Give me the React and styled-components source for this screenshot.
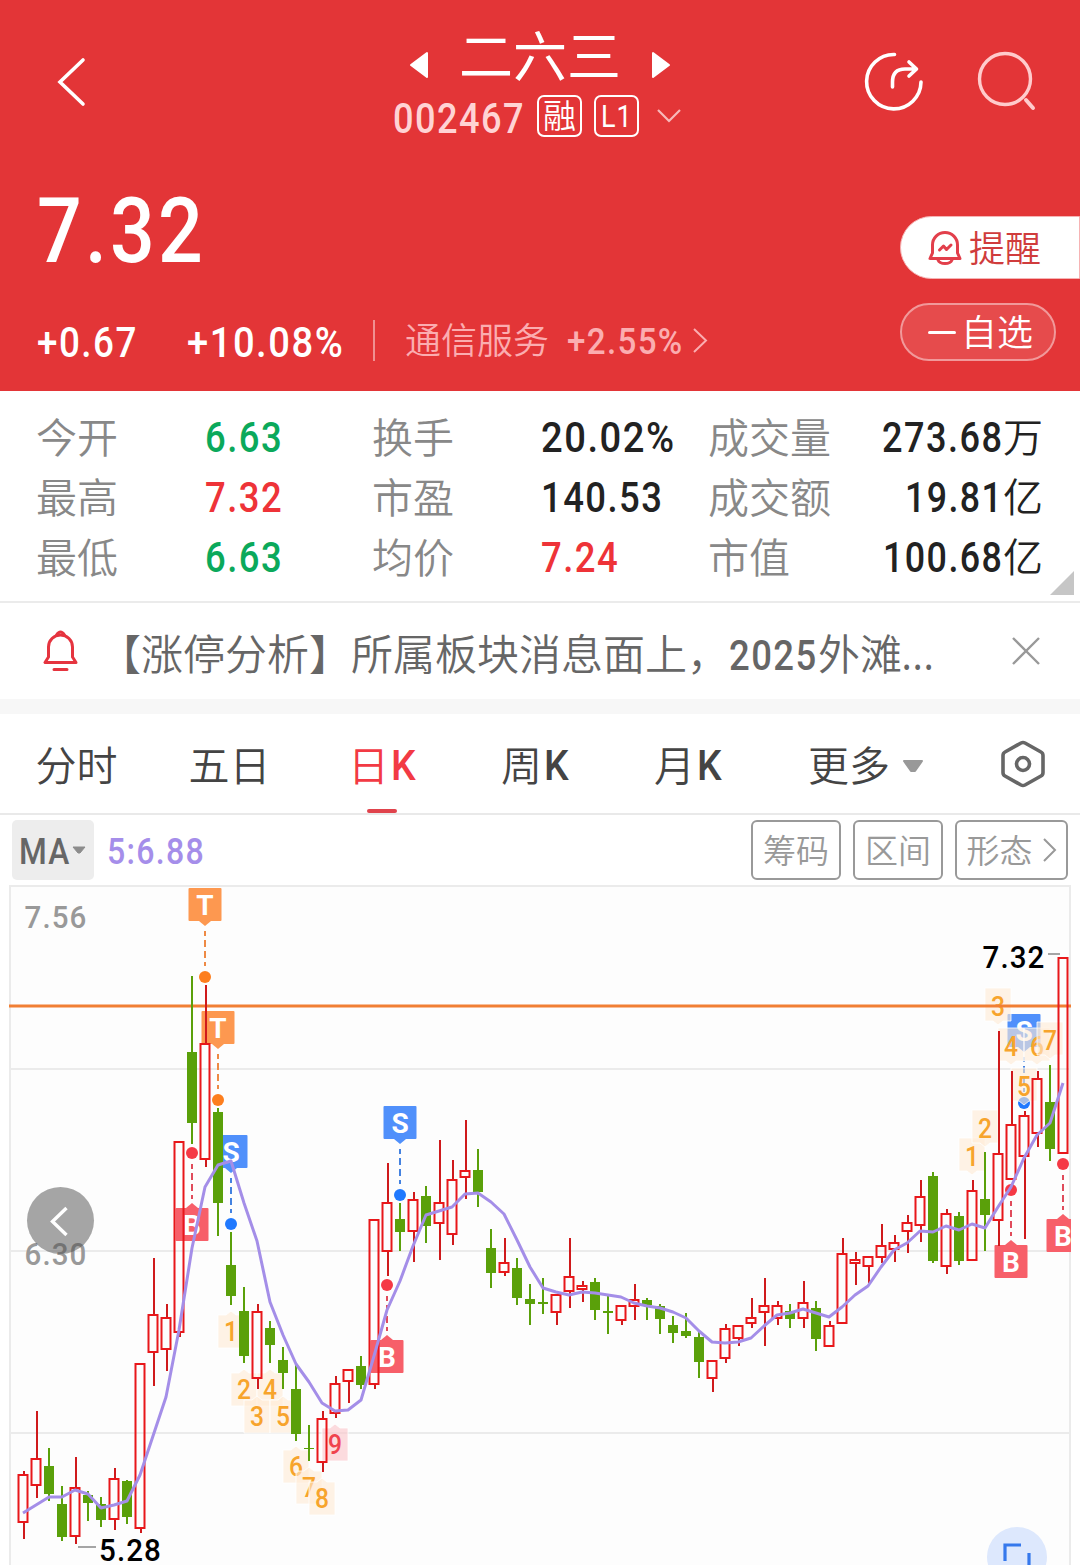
import React, { useLayoutEffect, useRef, useState } from 'react';
import styled, { createGlobalStyle } from 'styled-components';

const GlobalStyle = createGlobalStyle`
  * {
    box-sizing: border-box;
  }

  body {
    margin: 0;
    background: #fff;
    font-family: Roboto, 'Noto Sans CJK SC', sans-serif;
  }

  button {
    font-family: inherit;
  }
`;

const Page = styled.div`
  width: 1080px;
  height: 1565px;
  overflow: hidden;
  display: flex;
  flex-direction: column;
  background: #fff;
`;

const Cjk = styled.span`
  padding-bottom: 0.12em;
  font-family: 'Noto Sans CJK SC', sans-serif;
  font-weight: ${({ $weight }) => $weight || 350};
  font-size: ${({ $size }) => $size}px;
  line-height: 1;
  color: ${({ $color }) => $color || 'inherit'};
  white-space: nowrap;
`;

const NumBox = styled.span`
  display: inline-block;
  flex: none;
  width: ${({ $width }) => $width}px;
  font-size: ${({ $size }) => $size}px;
  font-weight: ${({ $weight }) => $weight || 500};
  letter-spacing: 0.04em;
  line-height: 1;
  color: ${({ $color }) => $color || 'inherit'};
`;

const NumInner = styled.span`
  display: inline-block;
  white-space: nowrap;
  transform-origin: left center;
`;

// Narrow numerals: squeezes the text into the given width
function Num({ width, size, weight, color, children }) {
  const ref = useRef(null);
  const [scale, setScale] = useState(1);

  useLayoutEffect(() => {
    setScale(width / ref.current.offsetWidth);
  }, [width, children]);

  return (
    <NumBox $width={width} $size={size} $weight={weight} $color={color}>
      <NumInner ref={ref} style={{ transform: `scaleX(${scale})` }}>
        {children}
      </NumInner>
    </NumBox>
  );
}

/* ---------- header ---------- */

const Header = styled.header`
  height: 391px;
  flex: none;
  background: #e33537;
  color: #fff;
`;

const TopBar = styled.div`
  display: grid;
  grid-template-columns: 340px 400px 340px;
  height: 150px;
`;

const BackSlot = styled.div`
  padding: 57px 0 0 57px;
`;

const TitleBlock = styled.div`
  display: flex;
  flex-direction: column;
  align-items: center;
  padding-top: 29px;
`;

const TitleRow = styled.div`
  display: flex;
  align-items: center;
  gap: 30px;
  height: 60px;

  svg {
    margin-top: 12px;
  }

  ${Cjk} {
    margin-top: -4px;
  }
`;

const CodeRow = styled.div`
  display: flex;
  align-items: center;
  height: 42px;
  margin-top: 6px;
  padding-right: 5px;
`;

const Code = styled.span`
  padding-top: 4px;
`;

const Tag = styled.span`
  display: flex;
  align-items: center;
  justify-content: center;
  width: 45px;
  height: 42px;
  margin-left: 12px;
  border: 2px solid #fff;
  border-radius: 7px;
`;

const ChevronDown = styled.svg`
  margin-left: 17px;
`;

const TopActions = styled.div`
  display: flex;
  gap: 53px;
  padding: 51px 0 0 124px;
`;

const Quote = styled.div`
  display: grid;
  grid-template-columns: 900px 180px;
  height: 241px;
`;

const PriceColumn = styled.div`
  padding: 37px 0 0 37px;
`;

const Price = styled.div`
  height: 90px;
`;

const ChangeRow = styled.div`
  display: flex;
  align-items: center;
  height: 42px;
  margin-top: 44px;
`;

const Gap = styled.span`
  flex: none;
  width: ${({ $w }) => $w}px;
`;

const Divider = styled.span`
  width: 2px;
  height: 41px;
  margin: -3px 30px 0 29px;
  background: rgba(255, 255, 255, 0.45);
`;

const Sector = styled.span`
  display: flex;
  align-items: center;
  color: #fbadb0;

  ${Cjk} {
    margin-top: -3px;
  }

  svg {
    margin-top: -3px;
  }
`;

const ActionColumn = styled.div`
  display: flex;
  flex-direction: column;
  align-items: flex-start;
  gap: 24px;
  padding-top: 66px;
`;

const RemindButton = styled.button`
  display: flex;
  align-items: center;
  gap: 7px;
  width: 180px;
  height: 63px;
  padding: 1px 0 0 27px;
  border: 1px solid #f6b3b4;
  border-radius: 32px 0 0 32px;
  background: #fff;
  color: #d03c3c;
`;

const WatchButton = styled.button`
  display: flex;
  align-items: center;
  gap: 5px;
  width: 156px;
  height: 58px;
  padding: 1px 0 0 26px;
  border: 2px solid #f1999a;
  border-radius: 29px;
  background: #e64b4c;
  color: #fff;
`;

const Minus = styled.span`
  width: 28px;
  height: 3px;
  border-radius: 2px;
  background: #fff;
`;

/* ---------- stats ---------- */

const Stats = styled.section`
  position: relative;
  flex: none;
  display: grid;
  grid-template-columns: 169px 167px 169px 167px 140px 1fr;
  grid-template-rows: repeat(3, 60px);
  height: 212px;
  padding: 16px 37px 0 36px;
  border-bottom: 2px solid #ebebeb;
  align-items: center;
`;

const StatValue = styled.span`
  display: flex;
  align-items: center;
  justify-content: ${({ $right }) => ($right ? 'flex-end' : 'flex-start')};
  padding-top: 1px;
  color: ${({ $color }) => $color || '#222'};

  ${Cjk} {
    margin-top: 0;
  }
`;

const StatLabel = styled(Cjk)`
  padding-top: 2px;
  color: #888;
`;

const Corner = styled.span`
  position: absolute;
  right: 6px;
  bottom: 6px;
  width: 24px;
  height: 24px;
  background: #c6c6c6;
  clip-path: polygon(100% 0, 100% 100%, 0 100%);
`;

/* ---------- news ---------- */

const News = styled.section`
  flex: none;
  display: flex;
  align-items: center;
  height: 111px;
  padding: 0 40px 0 43px;
  border-bottom: 15px solid #f7f7f7;
  color: #666;
`;

const NewsText = styled.p`
  display: flex;
  align-items: center;
  flex: 1;
  margin: 8px 0 0 21px;

  ${Cjk} {
    margin-top: 0;
  }
`;

/* ---------- tabs ---------- */

const Tabs = styled.nav`
  flex: none;
  display: flex;
  height: 101px;
  border-bottom: 2px solid #e9e9e9;
`;

const Tab = styled.button`
  position: relative;
  display: flex;
  align-items: center;
  justify-content: center;
  gap: 2px;
  width: ${({ $wide }) => ($wide ? 202 : 153)}px;
  padding: 4px 0 0;
  border: 0;
  background: none;
  color: ${({ $active }) => ($active ? '#f23a44' : '#444')};

  ${({ $active }) =>
    $active &&
    `&::after {
      content: '';
      position: absolute;
      left: 61px;
      bottom: 0;
      width: 30px;
      height: 4px;
      border-radius: 2px;
      background: #e0434c;
    }`}
`;

const MoreArrow = styled.svg`
  margin-left: 10px;
`;

const Settings = styled.div`
  padding: 26px 0 0 33px;
`;

/* ---------- indicator bar ---------- */

const IndicatorBar = styled.div`
  flex: none;
  display: flex;
  align-items: center;
  height: 70px;
  padding: 0 12px;
`;

const MaButton = styled.button`
  display: flex;
  align-items: center;
  gap: 0;
  width: 82px;
  height: 60px;
  padding: 4px 0 0 7px;
  margin-right: 13px;
  border: 0;
  border-radius: 5px;
  background: #ededed;
  color: #666;
`;

const MaValue = styled.span`
  display: flex;
  flex: 1;
  padding-top: 4px;
`;

const ChipButton = styled.button`
  display: flex;
  align-items: center;
  justify-content: center;
  gap: 10px;
  width: ${({ $width }) => $width}px;
  height: 60px;
  padding: 2px 0 0;
  margin-left: 12px;
  border: 2px solid #999;
  border-radius: 6px;
  background: #fff;
  color: #999;
`;

/* ---------- chart ---------- */

const ChartArea = styled.div`
  position: relative;
  flex: none;
  height: 680px;

  > svg {
    display: block;
  }
`;

const PrevButton = styled.button`
  position: absolute;
  left: 27px;
  top: 302px;
  width: 67px;
  height: 67px;
  padding: 0;
  border: 0;
  border-radius: 50%;
  background: rgba(77, 77, 77, 0.5);
`;

const ExpandButton = styled.button`
  position: absolute;
  left: 987px;
  top: 642px;
  width: 60px;
  height: 60px;
  padding: 0;
  border: 0;
  border-radius: 50%;
  background: #dde8fd;
`;

// [up, high, top, bottom, low], in chart pixels
const candles = [
  [1, 1471, 1474, 1523, 1539], [1, 1411, 1458, 1486, 1498], [0, 1448, 1466, 1494, 1501],
  [0, 1486, 1504, 1537, 1541], [1, 1457, 1487, 1537, 1544], [0, 1491, 1495, 1503, 1521],
  [0, 1497, 1504, 1520, 1527], [1, 1468, 1478, 1520, 1530], [0, 1480, 1481, 1517, 1524],
  [1, 1363, 1363, 1529, 1533], [1, 1258, 1314, 1353, 1386], [1, 1304, 1317, 1350, 1371],
  [1, 1141, 1141, 1333, 1337], [0, 976, 1052, 1123, 1144], [1, 985, 1043, 1160, 1167],
  [0, 1108, 1112, 1203, 1236], [0, 1232, 1265, 1296, 1305], [0, 1287, 1311, 1356, 1363],
  [1, 1304, 1311, 1379, 1389], [0, 1321, 1328, 1345, 1363], [0, 1347, 1360, 1373, 1389],
  [0, 1365, 1389, 1434, 1441], [0, 1425, 1448, 1449, 1461], [1, 1411, 1418, 1463, 1472],
  [1, 1376, 1383, 1414, 1418], [1, 1369, 1369, 1382, 1403], [0, 1356, 1366, 1385, 1389],
  [1, 1219, 1219, 1385, 1389], [1, 1163, 1202, 1252, 1276], [0, 1203, 1219, 1232, 1251],
  [1, 1192, 1199, 1232, 1262], [0, 1186, 1196, 1226, 1243], [1, 1140, 1202, 1224, 1260],
  [1, 1160, 1179, 1235, 1245], [1, 1120, 1170, 1178, 1199], [0, 1149, 1170, 1192, 1207],
  [0, 1229, 1248, 1273, 1288], [1, 1238, 1262, 1273, 1276], [0, 1258, 1268, 1298, 1305],
  [0, 1284, 1299, 1304, 1325], [0, 1278, 1302, 1304, 1314], [1, 1294, 1294, 1313, 1325],
  [1, 1238, 1276, 1292, 1308], [1, 1281, 1285, 1290, 1302], [0, 1278, 1282, 1310, 1320],
  [0, 1296, 1311, 1313, 1334], [1, 1305, 1305, 1321, 1325], [1, 1284, 1299, 1307, 1320],
  [0, 1298, 1300, 1305, 1320], [0, 1304, 1306, 1319, 1334], [0, 1316, 1325, 1333, 1343],
  [0, 1313, 1331, 1336, 1338], [0, 1330, 1337, 1362, 1378], [1, 1360, 1360, 1379, 1392],
  [1, 1324, 1328, 1359, 1363], [1, 1325, 1325, 1339, 1346], [1, 1298, 1317, 1324, 1328],
  [1, 1278, 1305, 1313, 1346], [1, 1301, 1305, 1319, 1325], [0, 1304, 1311, 1319, 1328],
  [1, 1281, 1302, 1319, 1328], [0, 1301, 1308, 1339, 1351], [1, 1321, 1325, 1347, 1347],
  [1, 1238, 1253, 1324, 1324], [1, 1252, 1259, 1264, 1285], [1, 1256, 1256, 1267, 1283],
  [1, 1224, 1245, 1258, 1263], [1, 1235, 1242, 1250, 1262], [1, 1215, 1222, 1232, 1253],
  [1, 1180, 1196, 1226, 1242], [0, 1172, 1176, 1261, 1263], [1, 1209, 1213, 1267, 1274],
  [0, 1212, 1216, 1261, 1265], [1, 1180, 1190, 1261, 1261], [0, 1152, 1199, 1215, 1251],
  [1, 1031, 1153, 1221, 1246], [1, 1071, 1124, 1180, 1180], [1, 1111, 1115, 1157, 1239],
  [1, 1071, 1078, 1134, 1147], [0, 1065, 1102, 1149, 1161], [1, 957, 957, 1154, 1154],
];

const ma5 = [
  1513, 1505, 1497, 1497, 1490, 1494, 1508, 1505, 1501, 1475, 1436, 1397, 1330, 1248, 1187,
  1165, 1161, 1203, 1241, 1302, 1335, 1364, 1382, 1403, 1411, 1410, 1400, 1356, 1310, 1281,
  1246, 1215, 1211, 1207, 1194, 1193, 1202, 1214, 1240, 1267, 1288, 1292, 1295, 1292, 1293,
  1295, 1297, 1303, 1306, 1308, 1312, 1318, 1331, 1342, 1343, 1342, 1338, 1326, 1315, 1313,
  1309, 1313, 1317, 1307, 1295, 1286, 1267, 1250, 1243, 1231, 1232, 1226, 1230, 1224, 1228,
  1207, 1187, 1158, 1135, 1123, 1083,
];

const candleX = (i) => 23 + i * 13;

const flagColors = {
  T: { box: '#fd9850', dot: '#fd7e1e', line: '#ee8a45' },
  S: { box: '#5090fb', dot: '#2079fe', line: '#4482e0' },
  B: { box: '#f75f69', dot: '#f53945', line: '#e04b5b' },
};

// y is the dot next to the candle
const flags = [
  { type: 'T', i: 14, y: 977 },
  { type: 'T', i: 15, y: 1100 },
  { type: 'S', i: 16, y: 1224 },
  { type: 'B', i: 13, y: 1153 },
  { type: 'S', i: 29, y: 1195 },
  { type: 'B', i: 28, y: 1285 },
  { type: 'S', i: 77, y: 1103 },
  { type: 'B', i: 76, y: 1190 },
  { type: 'B', i: 80, y: 1164 },
];

const counts = [
  { n: 1, i: 16, y: 1315 },
  { n: 2, i: 17, y: 1373 },
  { n: 4, i: 19, y: 1373 },
  { n: 3, i: 18, y: 1400 },
  { n: 5, i: 20, y: 1400 },
  { n: 6, i: 21, y: 1450 },
  { n: 7, i: 22, y: 1471 },
  { n: 8, i: 23, y: 1482 },
  { n: 9, i: 24, y: 1428, hot: true },
  { n: 1, i: 73, y: 1138, above: true },
  { n: 2, i: 74, y: 1110, above: true },
  { n: 3, i: 75, y: 988, above: true },
  { n: 4, i: 76, y: 1028, above: true },
  { n: 6, i: 78, y: 1028, above: true },
  { n: 5, i: 77, y: 1068, above: true },
  { n: 7, i: 79, y: 1022, above: true },
];

function Candle({ i, data }) {
  const [up, high, top, bottom, low] = data;
  const x = candleX(i);
  if (up) {
    return (
      <g fill="none" stroke="#e8171a" strokeWidth="2">
        <path d={`M${x + 1} ${high}V${top}M${x + 1} ${bottom}V${low}`} stroke="#cf1a1c" />
        <rect x={x - 4.5} y={top + 1} width="9" height={bottom - top - 2} />
      </g>
    );
  }
  return (
    <g fill="#5aa00a">
      <rect x={x - 1} y={high} width="2" height={low - high} />
      <rect x={x - 5} y={top} width="10" height={bottom - top} />
    </g>
  );
}

function Flag({ type, i, y }) {
  const x = candleX(i);
  const c = flagColors[type];
  const below = type === 'B';
  const boxY = below ? y + 55 : y - 89;
  const tip = below
    ? `M${x - 6} ${boxY}L${x} ${boxY - 5}L${x + 6} ${boxY}Z`
    : `M${x - 6} ${boxY + 33}L${x} ${boxY + 38}L${x + 6} ${boxY + 33}Z`;
  const dash = below ? `M${x} ${y + 11}V${y + 46}` : `M${x} ${y - 46}V${y - 11}`;
  return (
    <g>
      <rect x={x - 16.5} y={boxY} width="33" height="33" rx="1" fill={c.box} />
      <path d={tip} fill={c.box} />
      <path d={dash} stroke={c.line} strokeWidth="2" strokeDasharray="7 4" strokeDashoffset="2" />
      <circle cx={x} cy={y} r="6" fill={c.dot} />
      <text x={x} y={boxY + 26.5} fill="#fff" fontSize="28" fontWeight="700" textAnchor="middle">
        {type}
      </text>
    </g>
  );
}

function Count({ n, i, y, above, hot }) {
  const x = candleX(i);
  const d = above
    ? `M${x - 13} ${y}h26v33h-8l-5 4l-5 -4h-8z`
    : `M${x - 13} ${y}h8l5 -4l5 4h8v33h-26z`;
  return (
    <g>
      <path d={d} fill={hot ? '#fcc4ca' : '#ffebd6'} fillOpacity="0.6" stroke="#fff" strokeOpacity="0.8" />
      <text
        x={x - 7}
        y={above ? y + 28 : y + 25.5}
        fill={hot ? '#f0434e' : '#f7a42c'}
        fontSize="28.5"
        fontWeight="500"
        textLength="14"
        lengthAdjust="spacingAndGlyphs"
      >
        {n}
      </text>
    </g>
  );
}

function AxisText({ x, y, color, children }) {
  return (
    <text x={x} y={y} fill={color} fontSize="32" fontWeight="500" letterSpacing="1.2" textLength="63" lengthAdjust="spacingAndGlyphs">
      {children}
    </text>
  );
}

function KLineChart() {
  const maPoints = ma5.map((y, i) => `${candleX(i)},${y}`).join(' ');
  return (
    <ChartArea>
      <svg width="1080" height="680" viewBox="0 885 1080 680">
        <defs>
          <clipPath id="plot">
            <rect x="9" y="885" width="1062" height="690" />
          </clipPath>
        </defs>
        <rect x="10" y="886" width="1060" height="700" fill="#fdfdfd" stroke="#ebebeb" strokeWidth="2" />
        <path d="M10 1069H1070M10 1251H1070M10 1433H1070" stroke="#ebebeb" strokeWidth="2" />
        <AxisText x="24.5" y="928" color="#999">7.56</AxisText>
        <AxisText x="24.5" y="1265" color="#999">6.30</AxisText>
        <g clipPath="url(#plot)">
          {flags.map((f) => (
            <Flag key={`${f.type}${f.i}`} {...f} />
          ))}
          {counts.map((c) => (
            <Count key={c.i} {...c} />
          ))}
          <path d="M9 1006H1071" stroke="#f17f34" strokeWidth="3" />
          {candles.map((c, i) => (
            <Candle key={i} i={i} data={c} />
          ))}
          <polyline points={maPoints} fill="none" stroke="#a48ee8" strokeWidth="3" strokeLinejoin="round" />
        </g>
        <path d="M78 1547H96M1048 954H1060" stroke="#888" strokeWidth="1.6" />
        <AxisText x="99" y="1560.5" color="#000">5.28</AxisText>
        <AxisText x="982.5" y="968" color="#000">7.32</AxisText>
      </svg>
      <PrevButton>
        <svg width="67" height="67" fill="none" stroke="#fff" strokeWidth="3.4">
          <path d="M39.500 21L25.500 34.500L39.500 48" />
        </svg>
      </PrevButton>
      <ExpandButton>
        <svg width="60" height="60" fill="none" stroke="#3578ec" strokeWidth="3.2">
          <path d="M34 18H18V34M42 26V42H26" />
        </svg>
      </ExpandButton>
    </ChartArea>
  );
}

function StockHeader() {
  return (
    <Header>
      <TopBar>
        <BackSlot>
          <svg width="30" height="50" fill="none" stroke="#fff" strokeWidth="3.6" strokeLinecap="round">
            <path d="M26 3L3 25L26 47" />
          </svg>
        </BackSlot>
        <TitleBlock>
          <TitleRow>
            <svg width="20" height="28">
              <path d="M18 2V26L2 14Z" fill="#fff" stroke="#fff" strokeWidth="2" strokeLinejoin="round" />
            </svg>
            <Cjk $size={54} $weight={400}>二六三</Cjk>
            <svg width="20" height="28">
              <path d="M2 2V26L18 14Z" fill="#fff" stroke="#fff" strokeWidth="2" strokeLinejoin="round" />
            </svg>
          </TitleRow>
          <CodeRow>
            <Code><Num size={43} width={132} color="#ffd3d4">002467</Num></Code>
            <Tag><Cjk $size={33}>融</Cjk></Tag>
            <Tag><Num size={32} width={32} weight={400}>L1</Num></Tag>
            <ChevronDown width="26" height="16" fill="none" stroke="#f8b9ba" strokeWidth="2.2">
              <path d="M2 2L13 13L24 2" />
            </ChevronDown>
          </CodeRow>
        </TitleBlock>
        <TopActions>
          <svg width="60" height="60" fill="none" stroke="#fff" strokeWidth="3.6" strokeLinecap="round" strokeLinejoin="round">
            <path d="M30.500 3.500A27.200 27.200 0 1 0 57 31" />
            <path d="M28.500 36V31Q28.500 18 41 18H52M45 11L52.500 18L45 25" />
          </svg>
          <svg width="62" height="62" fill="none" stroke="#ffcbcc" strokeLinecap="round">
            <circle cx="28" cy="28" r="25.500" strokeWidth="3.400" />
            <path d="M49 49L56 57" strokeWidth="4" />
          </svg>
        </TopActions>
      </TopBar>
      <Quote>
        <PriceColumn>
          <Price><Num size={90} width={169}>7.32</Num></Price>
          <ChangeRow>
            <Num size={43} width={101}>+0.67</Num>
            <Gap $w={49} />
            <Num size={43} width={157}>+10.08%</Num>
            <Divider />
            <Sector>
              <Cjk $size={36}>通信服务</Cjk>
              <Gap $w={18} />
              <Num size={36} width={117}>+2.55%</Num>
              <Gap $w={8} />
              <svg width="16" height="28" fill="none" stroke="currentColor" strokeWidth="2">
                <path d="M2 2L14 13.500L2 25" />
              </svg>
            </Sector>
          </ChangeRow>
        </PriceColumn>
        <ActionColumn>
          <RemindButton>
            <svg width="34" height="36" fill="none" stroke="#e23f4b" strokeWidth="3" strokeLinejoin="round" strokeLinecap="round">
              <path d="M2 28.500H32L29.500 23V15A12.500 12.500 0 0 0 4.500 15V23Z" />
              <path d="M10 30Q11.500 33.500 17 33.500Q22.500 33.500 24 30" />
              <path d="M11.500 20L15.500 16L18.500 19.500L23 15" />
            </svg>
            <Cjk $size={36}>提醒</Cjk>
          </RemindButton>
          <WatchButton>
            <Minus />
            <Cjk $size={36}>自选</Cjk>
          </WatchButton>
        </ActionColumn>
      </Quote>
    </Header>
  );
}

const GREEN = '#0ba95b';
const RED = '#ee3338';

const statRows = [
  [['今开', '6.63', 78, GREEN], ['换手', '20.02%', 135], ['成交量', '273.68', 121, null, '万']],
  [['最高', '7.32', 78, RED], ['市盈', '140.53', 122], ['成交额', '19.81', 98, null, '亿']],
  [['最低', '6.63', 78, GREEN], ['均价', '7.24', 78, RED], ['市值', '100.68', 120, null, '亿']],
];

function StatsPanel() {
  return (
    <Stats>
      {statRows.flat().map(([label, value, width, color, unit]) => (
        <React.Fragment key={label}>
          <StatLabel $size={41}>{label}</StatLabel>
          <StatValue $color={color} $right={Boolean(unit)}>
            <Num size={43} width={width}>{value}</Num>
            {unit && <Cjk $size={40}>{unit}</Cjk>}
          </StatValue>
        </React.Fragment>
      ))}
      <Corner />
    </Stats>
  );
}

function App() {
  return (
    <Page>
      <GlobalStyle />
      <StockHeader />
      <StatsPanel />
      <News>
        <svg width="35" height="42" fill="none" stroke="#e5343f" strokeWidth="3" strokeLinecap="round" strokeLinejoin="round">
          <path d="M2 32.500H33L29.500 27V17A12 12 0 0 0 5.500 17V27Z" />
          <path d="M13.500 5Q17.500 -1 21.500 5M11 39.500H24" />
        </svg>
        <NewsText>
          <Cjk $size={42}>【涨停分析】所属板块消息面上，</Cjk>
          <Num size={43} width={89}>2025</Num>
          <Cjk $size={42}>外滩</Cjk>
          <Num size={43} width={33}>...</Num>
        </NewsText>
        <svg width="28" height="28" fill="none" stroke="#999" strokeWidth="2.4">
          <path d="M1 1L27 27M27 1L1 27" />
        </svg>
      </News>
      <Tabs>
        <Tab><Cjk $size={41}>分时</Cjk></Tab>
        <Tab><Cjk $size={41}>五日</Cjk></Tab>
        <Tab $active><Cjk $size={41}>日</Cjk><Num size={42} width={26}>K</Num></Tab>
        <Tab><Cjk $size={41}>周</Cjk><Num size={42} width={26}>K</Num></Tab>
        <Tab><Cjk $size={41}>月</Cjk><Num size={42} width={26}>K</Num></Tab>
        <Tab $wide>
          <Cjk $size={41}>更多</Cjk>
          <MoreArrow width="22" height="14">
            <path d="M2 2H20L13 12H9Z" fill="#999" stroke="#999" strokeWidth="2" strokeLinejoin="round" />
          </MoreArrow>
        </Tab>
        <Settings>
          <svg width="46" height="48" fill="none" stroke="#666" strokeWidth="3.600" strokeLinejoin="round">
            <path d="M21 3Q23 2 25 3L41 12Q43 13 43 15.500V32.500Q43 35 41 36L25 45Q23 46 21 45L5 36Q3 35 3 32.500V15.500Q3 13 5 12Z" />
            <circle cx="23" cy="24" r="6.500" />
          </svg>
        </Settings>
      </Tabs>
      <IndicatorBar>
        <MaButton>
          <Num size={36} width={52}>MA</Num>
          <svg width="16" height="14">
            <path d="M2 2H14L9 8H7Z" fill="#8c8c8c" stroke="#8c8c8c" strokeLinejoin="round" />
          </svg>
        </MaButton>
        <MaValue><Num size={36} width={98} color="#a58eea">5:6.88</Num></MaValue>
        <ChipButton $width={90}><Cjk $size={33}>筹码</Cjk></ChipButton>
        <ChipButton $width={90}><Cjk $size={33}>区间</Cjk></ChipButton>
        <ChipButton $width={113}>
          <Cjk $size={33}>形态</Cjk>
          <svg width="14" height="26" fill="none" stroke="#999" strokeWidth="2">
            <path d="M1 1L12 12L1 23" />
          </svg>
        </ChipButton>
      </IndicatorBar>
      <KLineChart />
    </Page>
  );
}

export default App;
